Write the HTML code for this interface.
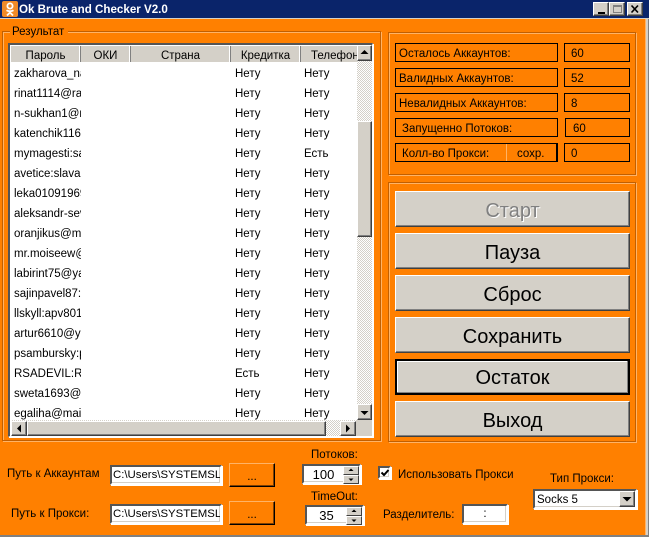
<!DOCTYPE html>
<html><head><meta charset="utf-8">
<style>
html,body{margin:0;padding:0}
body{position:relative;width:649px;height:537px;overflow:hidden;background:#ff8000;font-family:"Liberation Sans",sans-serif;font-size:11.5px;color:#000}
div,span.a{position:absolute;box-sizing:border-box;white-space:nowrap}
.t{line-height:14px;height:14px;margin-top:1px}
.grp{border:1px solid #c25f00;box-shadow:inset 1px 1px 0 #ffb366,1px 1px 0 #ffb366}
.gr{background:#d4d0c8}
.rs{background:#d4d0c8;border:1px solid;border-color:#fff #404040 #404040 #fff;box-shadow:inset -1px -1px 0 #808080}
.sunk{background:#fff;border:2px solid;border-color:#555 #fff #fff #555;box-shadow:1px 1px 0 #fff,inset -1px -1px 0 #d4d0c8}
.box{border:1px solid #000;background:#ff8000;line-height:20px;height:19px}
.bb{left:395px;width:235px;height:36px;background:#d4d0c8;border:1px solid;border-color:#fff #404040 #404040 #fff;box-shadow:inset -1px -1px 0 #808080;text-align:center;font-size:20px;line-height:36px;padding-top:1px}
.dots{background:#ff8000;border:1px solid;border-color:#ffb366 #000 #000 #ffb366;box-shadow:inset -1px -1px 0 #804000;text-align:center;line-height:27px;width:46px;height:24px;left:229px}
.checker{background-color:#fff;background-image:linear-gradient(45deg,#d4d0c8 25%,transparent 25%,transparent 75%,#d4d0c8 75%),linear-gradient(45deg,#d4d0c8 25%,transparent 25%,transparent 75%,#d4d0c8 75%);background-size:2px 2px;background-position:0 0,1px 1px}
.c{left:14px;width:67px;overflow:hidden;height:14px;line-height:14px;margin-top:1px}
.h{top:46px;height:16px;line-height:20px;text-align:center;background:#d4d0c8;border-right:1px solid #808080;box-shadow:inset -1px 0 0 #fff;overflow:hidden}
.spin{background:#d4d0c8;border:1px solid;border-color:#fff #404040 #404040 #fff;width:16px;height:9px}
.in{font-size:11.4px;line-height:17px;padding-left:1px;overflow:hidden}
</style></head><body>

<!-- title bar -->
<div style="left:0;top:0;width:649px;height:18px;background:#0a246a"></div>
<div style="left:0;top:18px;width:649px;height:1px;background:#d4d0c8"></div>
<div style="left:2px;top:1px;width:16px;height:16px;background:#f08a28;border-radius:2px">
<svg width="16" height="16" viewBox="0 0 16 16" style="position:absolute;left:0;top:0"><circle cx="8" cy="5" r="2.6" fill="none" stroke="#fff" stroke-width="1.8"/><path d="M4.5 9.3c2 1.3 5 1.3 7 0M8 10.5v1M8 11.5L5 14.5M8 11.5l3 3" fill="none" stroke="#fff" stroke-width="1.8"/></svg></div>
<div class="t" style="left:19px;top:2px;color:#fff;font-weight:bold;font-size:11.6px">Ok Brute and Checker V2.0</div>
<div class="rs" style="left:593px;top:2px;width:16px;height:14px"><div style="left:4px;top:9px;width:7px;height:2px;background:#000"></div></div>
<div class="rs" style="left:609px;top:2px;width:16px;height:14px"><div style="left:3px;top:2px;width:9px;height:8px;border:1px solid #808080;border-top-width:2px"></div></div>
<div class="rs" style="left:627px;top:2px;width:16px;height:14px"><svg width="14" height="12" style="position:absolute;left:0;top:0"><path d="M3.5 2.5l6.5 7M10 2.5l-6.5 7" stroke="#000" stroke-width="1.6" fill="none"/></svg></div>

<!-- window edges -->
<div style="left:645px;top:19px;width:4px;height:518px;background:#d4d0c8;border-left:1px solid #ffb366;border-right:1px solid #808080"></div>
<div style="left:0;top:535px;width:649px;height:2px;background:#808080"></div>

<!-- group results -->
<div class="grp" style="left:2px;top:31px;width:379px;height:410px"></div>
<div class="t" style="left:10px;top:24px;background:#ff8000;padding:0 4px 0 2px">Результат</div>

<!-- list -->
<div style="left:8px;top:43px;width:365px;height:394px;background:#fff;border-top:2px solid #555;border-left:2px solid #555;border-right:1px solid #fff;border-bottom:1px solid #fff;box-shadow:1px 1px 0 #fff"></div>
<div style="left:11px;top:46px;width:346px;height:16px;background:#d4d0c8"></div>
<div class="h" style="left:11px;width:70px">Пароль</div>
<div class="h" style="left:81px;width:50px">ОКИ</div>
<div class="h" style="left:131px;width:100px">Страна</div>
<div class="h" style="left:231px;width:70px">Кредитка</div>
<div class="h" style="left:301px;width:56px;border:none;box-shadow:none;text-align:left;padding-left:10px">Телефон</div>

<div class="c" style="top:66px">zakharova_na</div><div class="t" style="left:235px;top:66px">Нету</div><div class="t" style="left:304px;top:66px">Нету</div>
<div class="c" style="top:86px">rinat1114@ra</div><div class="t" style="left:235px;top:86px">Нету</div><div class="t" style="left:304px;top:86px">Нету</div>
<div class="c" style="top:106px">n-sukhan1@m</div><div class="t" style="left:235px;top:106px">Нету</div><div class="t" style="left:304px;top:106px">Нету</div>
<div class="c" style="top:126px">katenchik116</div><div class="t" style="left:235px;top:126px">Нету</div><div class="t" style="left:304px;top:126px">Нету</div>
<div class="c" style="top:146px">mymagesti:sa</div><div class="t" style="left:235px;top:146px">Нету</div><div class="t" style="left:304px;top:146px">Есть</div>
<div class="c" style="top:166px">avetice:slava1</div><div class="t" style="left:235px;top:166px">Нету</div><div class="t" style="left:304px;top:166px">Нету</div>
<div class="c" style="top:186px">leka01091969</div><div class="t" style="left:235px;top:186px">Нету</div><div class="t" style="left:304px;top:186px">Нету</div>
<div class="c" style="top:206px">aleksandr-sev</div><div class="t" style="left:235px;top:206px">Нету</div><div class="t" style="left:304px;top:206px">Нету</div>
<div class="c" style="top:226px">oranjikus@ma</div><div class="t" style="left:235px;top:226px">Нету</div><div class="t" style="left:304px;top:226px">Нету</div>
<div class="c" style="top:246px">mr.moiseew@</div><div class="t" style="left:235px;top:246px">Нету</div><div class="t" style="left:304px;top:246px">Нету</div>
<div class="c" style="top:266px">labirint75@ya</div><div class="t" style="left:235px;top:266px">Нету</div><div class="t" style="left:304px;top:266px">Нету</div>
<div class="c" style="top:286px">sajinpavel87:</div><div class="t" style="left:235px;top:286px">Нету</div><div class="t" style="left:304px;top:286px">Нету</div>
<div class="c" style="top:306px">llskyll:apv801</div><div class="t" style="left:235px;top:306px">Нету</div><div class="t" style="left:304px;top:306px">Нету</div>
<div class="c" style="top:326px">artur6610@ya</div><div class="t" style="left:235px;top:326px">Нету</div><div class="t" style="left:304px;top:326px">Нету</div>
<div class="c" style="top:346px">psambursky:p</div><div class="t" style="left:235px;top:346px">Нету</div><div class="t" style="left:304px;top:346px">Нету</div>
<div class="c" style="top:366px">RSADEVIL:RA</div><div class="t" style="left:235px;top:366px">Есть</div><div class="t" style="left:304px;top:366px">Нету</div>
<div class="c" style="top:386px">sweta1693@m</div><div class="t" style="left:235px;top:386px">Нету</div><div class="t" style="left:304px;top:386px">Нету</div>
<div class="c" style="top:406px">egaliha@mail</div><div class="t" style="left:235px;top:406px">Нету</div><div class="t" style="left:304px;top:406px">Нету</div>

<!-- vertical scrollbar -->
<div class="checker" style="left:357px;top:60px;width:15px;height:345px"></div>
<div class="rs" style="left:357px;top:45px;width:15px;height:16px"><svg width="13" height="14" style="position:absolute;left:0;top:0"><path d="M6.5 4l4 4h-8z" fill="#000"/></svg></div>
<div class="rs" style="left:357px;top:121px;width:15px;height:116px"></div>
<div class="rs" style="left:357px;top:404px;width:15px;height:16px"><svg width="13" height="14" style="position:absolute;left:0;top:0"><path d="M6.5 10l4-4h-8z" fill="#000"/></svg></div>
<!-- horizontal scrollbar -->
<div class="checker" style="left:11px;top:420px;width:346px;height:16px"></div>
<div class="rs" style="left:11px;top:421px;width:16px;height:15px"><svg width="14" height="13" style="position:absolute;left:0;top:0"><path d="M5 6.5l4-4v8z" fill="#000"/></svg></div>
<div class="rs" style="left:27px;top:421px;width:299px;height:15px"></div>
<div class="rs" style="left:340px;top:421px;width:16px;height:15px"><svg width="14" height="13" style="position:absolute;left:0;top:0"><path d="M9 6.5l-4-4v8z" fill="#000"/></svg></div>
<div class="gr" style="left:356px;top:420px;width:16px;height:16px"></div>

<!-- stats group -->
<div class="grp" style="left:388px;top:32px;width:248px;height:143px"></div>
<div class="box" style="left:395px;top:43px;width:163px;padding-left:3px">Осталось Аккаунтов:</div>
<div class="box" style="left:564px;top:43px;width:66px;padding-left:6px">60</div>
<div class="box" style="left:395px;top:68px;width:163px;padding-left:3px">Валидных Аккаунтов:</div>
<div class="box" style="left:564px;top:68px;width:66px;padding-left:6px">52</div>
<div class="box" style="left:395px;top:93px;width:163px;padding-left:3px">Невалидных Аккаунтов:</div>
<div class="box" style="left:564px;top:93px;width:66px;padding-left:6px">8</div>
<div class="box" style="left:395px;top:118px;width:163px;padding-left:6px">Запущенно Потоков:</div>
<div class="box" style="left:565px;top:118px;width:65px;padding-left:7px">60</div>
<div class="box" style="left:395px;top:143px;width:163px;padding-left:6px;border-right-width:2px">Колл-во Прокси:</div>
<div style="left:506px;top:144px;width:1px;height:17px;background:#ffb366"></div>
<div class="t" style="left:517px;top:146px">сохр.</div>
<div class="box" style="left:564px;top:143px;width:66px;padding-left:6px">0</div>

<!-- buttons group -->
<div class="grp" style="left:388px;top:182px;width:248px;height:260px"></div>
<div class="bb" style="top:191px;color:#808080;text-shadow:1px 1px 0 #fff">Старт</div>
<div class="bb" style="top:233px">Пауза</div>
<div class="bb" style="top:275px">Сброс</div>
<div class="bb" style="top:317px">Сохранить</div>
<div class="bb" style="top:359px;border:2px solid #000;line-height:32px;box-shadow:inset -1px -1px 0 #808080,inset 1px 1px 0 #fff">Остаток</div>
<div class="bb" style="top:401px">Выход</div>

<!-- bottom -->
<div class="t" style="left:7px;top:466px">Путь к Аккаунтам</div>
<div class="t" style="left:11px;top:506px">Путь к Прокси:</div>
<div class="sunk in" style="left:110px;top:465px;width:112px;height:20px">C:\Users\SYSTEMSL0</div>
<div class="sunk in" style="left:110px;top:504px;width:112px;height:20px">C:\Users\SYSTEMSL0</div>
<div class="dots" style="top:463px">...</div>
<div class="dots" style="top:501px">...</div>

<div class="t" style="left:311px;top:447px">Потоков:</div>
<div class="sunk" style="left:302px;top:464px;width:59px;height:20px;text-align:center;padding-right:16px;line-height:17px;font-size:13px">100</div>
<div class="spin" style="left:343px;top:466px"><svg width="14" height="7" style="position:absolute;left:0;top:0"><path d="M7 1.5l2.5 2.5h-5z" fill="#000"/></svg></div>
<div class="spin" style="left:343px;top:475px"><svg width="14" height="7" style="position:absolute;left:0;top:0"><path d="M7 5l2.5-2.5h-5z" fill="#000"/></svg></div>
<div class="t" style="left:311px;top:489px">TimeOut:</div>
<div class="sunk" style="left:305px;top:505px;width:59px;height:20px;text-align:center;padding-right:16px;line-height:17px;font-size:13px">35</div>
<div class="spin" style="left:346px;top:507px"><svg width="14" height="7" style="position:absolute;left:0;top:0"><path d="M7 1.5l2.5 2.5h-5z" fill="#000"/></svg></div>
<div class="spin" style="left:346px;top:516px"><svg width="14" height="7" style="position:absolute;left:0;top:0"><path d="M7 5l2.5-2.5h-5z" fill="#000"/></svg></div>

<div class="sunk" style="left:378px;top:466px;width:13px;height:13px"><svg width="10" height="10" style="position:absolute;left:0;top:0"><path d="M1.5 4.5l2.5 2.5 4.5-5" stroke="#000" stroke-width="2" fill="none"/></svg></div>
<div class="t" style="left:398px;top:467px">Использовать Прокси</div>
<div class="t" style="left:383px;top:507px">Разделитель:</div>
<div class="sunk" style="left:462px;top:504px;width:46px;height:20px;text-align:center;line-height:16px">:</div>
<div class="t" style="left:550px;top:471px">Тип Прокси:</div>
<div class="sunk" style="left:533px;top:489px;width:104px;height:20px;line-height:19px;padding-left:2px">Socks 5</div>
<div class="rs" style="left:619px;top:491px;width:16px;height:16px"><svg width="14" height="14" style="position:absolute;left:0;top:0"><path d="M7 9.5l4.5-4.5h-9z" fill="#000"/></svg></div>

</body></html>
